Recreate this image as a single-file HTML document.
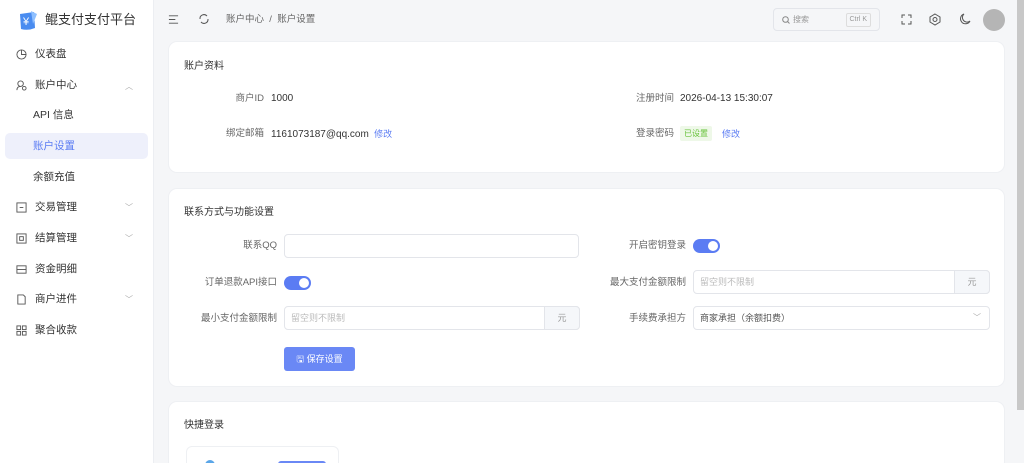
<!DOCTYPE html>
<html><head><meta charset="utf-8"><style>
*{box-sizing:border-box;margin:0;padding:0}
html,body{width:1024px;height:463px;overflow:hidden}
body{background:#f5f6f8;font-family:"Liberation Sans","Noto Sans CJK SC",sans-serif;font-size:10px;line-height:12px;color:#333;position:relative}
.side{position:absolute;left:0;top:0;width:154px;height:463px;background:#fff;border-right:1px solid #eceef2}
.logo{position:absolute;left:16px;top:8px}
.brand{position:absolute;left:45px;top:12px;font-size:13px;line-height:16px;color:#333}
.mi{position:absolute;left:16px;font-size:10.5px;color:#333;display:flex;align-items:center}
.mi svg{margin-right:8px}
.sub{position:absolute;left:33px;font-size:10.5px;color:#333}
.act{position:absolute;left:5px;top:133px;width:143px;height:26px;background:#eef0fb;border-radius:5px}
.chev{position:absolute;left:125px;font-size:8px;color:#aaa}
.top{position:absolute;left:155px;top:0;width:862px;height:40px}
.card{position:absolute;left:168px;width:837px;background:#fff;border-radius:9px;border:1px solid #eef0f3;overflow:hidden}
.t{position:absolute;font-size:10px;color:#333}
.lbl{position:absolute;font-size:9.5px;color:#666;text-align:right}
.inp{position:absolute;height:24px;border:1px solid #e3e5ea;border-radius:4px;background:#fff;font-size:9px;color:#bbb;padding-left:6px;line-height:22px}
.addon{position:absolute;right:-1px;top:-1px;height:24px;width:36px;background:#f5f7fa;border:1px solid #e3e5ea;border-radius:0 4px 4px 0;text-align:center;color:#999}
.sw{position:absolute;width:27px;height:14px;border-radius:7px;background:#5b7cf3}
.sw:after{content:"";position:absolute;right:2px;top:2px;width:10px;height:10px;border-radius:50%;background:#fff}
.scroll{position:absolute;right:0;top:0;width:7px;height:410px;background:#c8c8c8}
</style></head><body>
<div class="side">
<svg class="logo" width="22" height="24" viewBox="0 0 22 24"><path d="M4 6 L18 4 L19 20 Q12 23 5 21 Z" fill="#4a8cf0"/><path d="M15 3 L21 6 L17 16 Z" fill="#8fc0ff"/><text x="7" y="17" font-size="11" fill="#fff" font-family="Liberation Sans">¥</text></svg>
<div class="brand">鲲支付支付平台</div>
<div class="mi" style="top:48px"><svg width="11" height="11" viewBox="0 0 12 12" fill="none" stroke="#555" stroke-width="1"><circle cx="6" cy="6" r="5"/><path d="M6 1v5h5"/></svg>仪表盘</div>
<div class="mi" style="top:79px"><svg width="11" height="11" viewBox="0 0 12 12" fill="none" stroke="#555" stroke-width="1"><circle cx="5" cy="4" r="3"/><path d="M1 11c0-3 2-4 4-4"/><circle cx="9" cy="9" r="2"/></svg>账户中心</div>
<div class="chev" style="top:81px">︿</div>
<div class="sub" style="top:109px">API 信息</div>
<div class="act"></div>
<div class="sub" style="top:140px;color:#5b7cf3">账户设置</div>
<div class="sub" style="top:171px">余额充值</div>
<div class="mi" style="top:201px"><svg width="11" height="11" viewBox="0 0 12 12" fill="none" stroke="#555"><rect x="1" y="1" width="10" height="10"/><path d="M4 6h4"/></svg>交易管理</div><div class="chev" style="top:202px">﹀</div>
<div class="mi" style="top:232px"><svg width="11" height="11" viewBox="0 0 12 12" fill="none" stroke="#555"><rect x="1" y="1" width="10" height="10"/><rect x="4" y="4" width="4" height="4"/></svg>结算管理</div><div class="chev" style="top:233px">﹀</div>
<div class="mi" style="top:263px"><svg width="11" height="11" viewBox="0 0 12 12" fill="none" stroke="#555"><rect x="1" y="2" width="10" height="8"/><path d="M1 6h10"/></svg>资金明细</div>
<div class="mi" style="top:293px"><svg width="11" height="11" viewBox="0 0 12 12" fill="none" stroke="#555"><path d="M2 1h6l2 2v8H2z"/></svg>商户进件</div><div class="chev" style="top:294px">﹀</div>
<div class="mi" style="top:324px"><svg width="11" height="11" viewBox="0 0 12 12" fill="none" stroke="#555"><rect x="1" y="1" width="4" height="4"/><rect x="7" y="1" width="4" height="4"/><rect x="1" y="7" width="4" height="4"/><rect x="7" y="7" width="4" height="4"/></svg>聚合收款</div>
</div>
<div class="top">
<svg style="position:absolute;left:13px;top:14px" width="11" height="11" viewBox="0 0 12 12" stroke="#555"><path d="M1 2h10M1 6h7M1 10h10"/></svg>
<svg style="position:absolute;left:43px;top:13px" width="12" height="12" viewBox="0 0 12 12" fill="none" stroke="#555"><path d="M2 6a4 4 0 0 1 7-3M10 6a4 4 0 0 1-7 3"/></svg>
<div class="t" style="left:71px;top:14px;color:#666;font-size:9.5px">账户中心 &nbsp;/&nbsp; 账户设置</div>
<div style="position:absolute;left:618px;top:8px;width:107px;height:23px;border:1px solid #e3e5ea;border-radius:4px;font-size:8px;color:#999;padding:5px 0 0 19px">搜索<span style="position:absolute;right:8px;top:4px;border:1px solid #ddd;border-radius:2px;padding:0 3px;font-size:7px">Ctrl K</span><svg style="position:absolute;left:8px;top:7px" width="8" height="8" viewBox="0 0 8 8" fill="none" stroke="#888"><circle cx="3.5" cy="3.5" r="2.8"/><path d="M5.5 5.5l2 2"/></svg></div>
<svg style="position:absolute;left:746px;top:14px" width="11" height="11" viewBox="0 0 11 11" fill="none" stroke="#555"><path d="M1 4V1h3M7 1h3v3M10 7v3H7M4 10H1V7"/></svg>
<svg style="position:absolute;left:774px;top:13px" width="12" height="13" viewBox="0 0 12 13" fill="none" stroke="#555"><path d="M6 1l5 3v5l-5 3-5-3V4z"/><circle cx="6" cy="6.5" r="2"/></svg>
<svg style="position:absolute;left:804px;top:13px" width="12" height="12" viewBox="0 0 12 12" fill="none" stroke="#555"><path d="M5 1a5 5 0 1 0 6 7A4 4 0 0 1 5 1z"/></svg>
<div style="position:absolute;left:828px;top:9px;width:22px;height:22px;border-radius:50%;background:#b5b5b5"></div>
</div>
<div class="card" style="top:41px;height:132px">
<div class="t" style="left:15px;top:19px">账户资料</div>
<div class="lbl" style="left:40px;width:55px;top:51px">商户ID</div><div class="t" style="left:102px;top:51px">1000</div>
<div class="lbl" style="left:40px;width:55px;top:86px">绑定邮箱</div><div class="t" style="left:102px;top:86px">1161073187@qq.com <span style="color:#5b7cf3;font-size:9px">&nbsp;修改</span></div>
<div class="lbl" style="left:440px;width:65px;top:51px">注册时间</div><div class="t" style="left:511px;top:51px">2026-04-13 15:30:07</div>
<div class="lbl" style="left:440px;width:65px;top:86px">登录密码</div>
<div style="position:absolute;left:511px;top:84px;padding:2px 4px;background:#eef8e8;color:#67c23a;font-size:8px;border-radius:2px;line-height:11px">已设置</div>
<div class="t" style="left:553px;top:86px;color:#5b7cf3;font-size:9px">修改</div>
</div>
<div class="card" style="top:188px;height:199px">
<div class="t" style="left:15px;top:18px">联系方式与功能设置</div>
<div class="lbl" style="left:20px;width:88px;top:51px">联系QQ</div><div class="inp" style="left:115px;top:45px;width:295px"></div>
<div class="lbl" style="left:20px;width:88px;top:88px">订单退款API接口</div><div class="sw" style="left:115px;top:87px"></div>
<div class="lbl" style="left:20px;width:88px;top:124px">最小支付金额限制</div><div class="inp" style="left:115px;top:117px;width:296px">留空则不限制<div class="addon">元</div></div>
<div style="position:absolute;left:115px;top:158px;width:71px;height:24px;background:#6a88f5;border-radius:3px;color:#fff;font-size:9px;line-height:24px;text-align:center">🖫 保存设置</div>
<div class="lbl" style="left:420px;width:97px;top:51px">开启密钥登录</div><div class="sw" style="left:524px;top:50px"></div>
<div class="lbl" style="left:420px;width:97px;top:88px">最大支付金额限制</div><div class="inp" style="left:524px;top:81px;width:297px">留空则不限制<div class="addon">元</div></div>
<div class="lbl" style="left:420px;width:97px;top:124px">手续费承担方</div><div class="inp" style="left:524px;top:117px;width:297px;color:#555">商家承担（余额扣费）<span style="position:absolute;right:8px;color:#aaa;font-size:8px">﹀</span></div>
</div>
<div class="card" style="top:401px;height:70px">
<div class="t" style="left:15px;top:18px">快捷登录</div>
<div style="position:absolute;left:17px;top:44px;width:153px;height:40px;border:1px solid #eef0f3;border-radius:6px"><div style="position:absolute;left:91px;top:14px;width:48px;height:10px;background:#6a88f5;border-radius:3px"></div><div style="position:absolute;left:18px;top:13px;width:10px;height:10px;border-radius:50%;background:#5aa6e8"></div></div>
</div>
<div class="scroll"></div>
</body></html>
